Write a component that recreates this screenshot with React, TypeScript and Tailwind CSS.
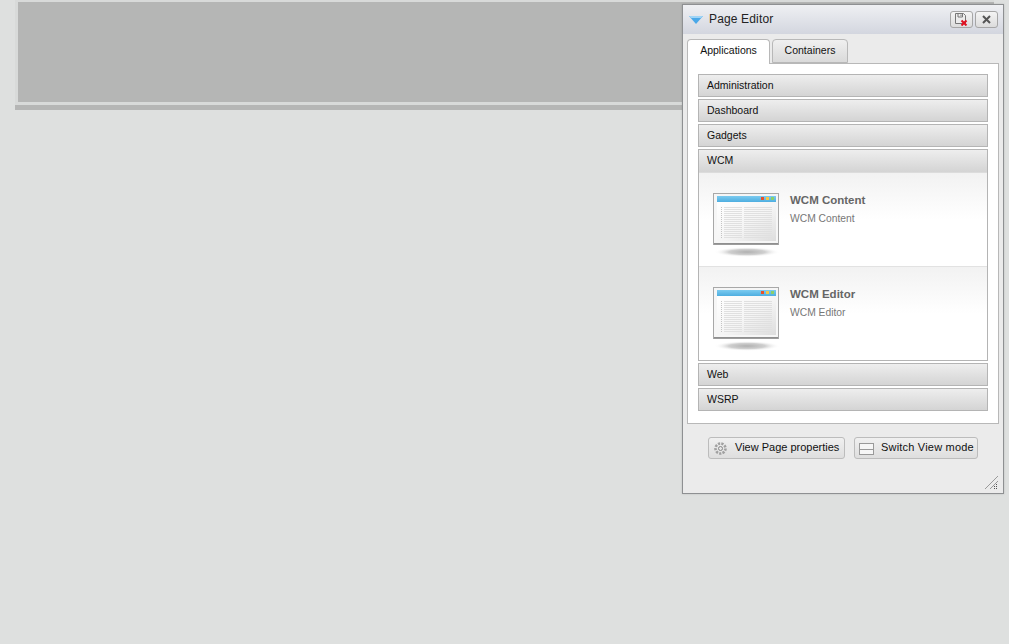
import React from 'react';

const font = { fontFamily: '"Liberation Sans", Arial, sans-serif' };

const Header = ({ label, open }: { label: string; open?: boolean }) => (
  <div className={`h-[23px] flex items-center pl-2 text-[10.5px] text-[#111] bg-gradient-to-b from-[#eeeeee] to-[#d4d4d4] ${open ? 'border-b border-[#dcdcdc]' : 'border border-[#b4b4b4]'}`}>
    {label}
  </div>
);

const Thumb = ({ id }: { id: string }) => (
  <div className="w-[68px] shrink-0 mt-[1px]">
    <svg width="68" height="66" viewBox="0 0 68 66">
      <defs>
        <radialGradient id={`sh-${id}`}>
          <stop offset="0%" stopColor="#b0b0b0" />
          <stop offset="55%" stopColor="#d0d0d0" />
          <stop offset="100%" stopColor="#ffffff" stopOpacity="0" />
        </radialGradient>
        <linearGradient id={`bar-${id}`} x1="0" y1="0" x2="0" y2="1">
          <stop offset="0%" stopColor="#7ccbf0" />
          <stop offset="100%" stopColor="#4eaee0" />
        </linearGradient>
        <linearGradient id={`body-${id}`} x1="0" y1="0" x2="1" y2="1">
          <stop offset="0%" stopColor="#ffffff" />
          <stop offset="55%" stopColor="#f4f4f4" />
          <stop offset="100%" stopColor="#dddddd" />
        </linearGradient>
      </defs>
      <ellipse cx="34" cy="59" rx="33" ry="5" fill={`url(#sh-${id})`} />
      <rect x="0.5" y="0.5" width="65" height="51" fill="#f6f6f6" stroke="#a8a8a8" />
      <rect x="1" y="50" width="64" height="1.5" fill="#8f8f8f" />
      <rect x="4" y="3" width="59" height="6" fill={`url(#bar-${id})`} />
      <rect x="48" y="4" width="3" height="3" fill="#e8502a" />
      <rect x="53" y="4" width="3" height="3" fill="#f2c84b" />
      <rect x="58" y="4" width="3" height="3" fill="#8ccf6a" />
      <rect x="4" y="9" width="59" height="39" fill={`url(#body-${id})`} />
      {[14, 16, 18, 20, 22, 24, 26, 28, 30, 32, 34, 36, 38, 40, 42, 44].map((y) => (
        <g key={y}>
          <rect x="11" y={y} width="18" height="1" fill="#e0e0e0" />
          <rect x="31" y={y} width="28" height="1" fill="#e0e0e0" />
          <rect x="8" y={y} width="1" height="1" fill="#c4c4c4" />
        </g>
      ))}
    </svg>
  </div>
);

const Item = ({ title, last }: { title: string; last?: boolean }) => (
  <div className={`flex pl-[14px] pt-[19px] bg-gradient-to-b from-[#f2f2f2] via-white to-white ${last ? 'h-[93px]' : 'h-[94px] border-b border-[#e2e2e2]'}`}>
    <Thumb id={last ? 'b' : 'a'} />
    <div className="ml-[9px]">
      <div className="text-[11.5px] font-bold text-[#666] leading-[14px] mt-[1px]">{title}</div>
      <div className="text-[10.3px] text-[#777] leading-[14px] mt-[5px]">{title}</div>
    </div>
  </div>
);

export default function App() {
  return (
    <div className="relative w-[1009px] h-[644px] overflow-hidden bg-[#dee0df]" style={font}>
      <div className="ml-[15px] w-[979px]">
        <div className="h-[105px] bg-[#d8dad9] pl-[3px] pt-[2px]">
          <div className="h-[100px] bg-[#b5b6b5]" />
        </div>
        <div className="h-[5px] bg-[#b5b6b5]" />
      </div>

      {/* floating page editor window */}
      <div className="absolute left-[682px] top-[4px] w-[322px] h-[490px] border border-[#8e9092] bg-[#ebebeb] shadow-[0_0_2px_rgba(0,0,0,0.15)]">
        <div className="h-[29px] flex items-center pl-[6px] pr-[5px] bg-gradient-to-b from-[#eff0f3] to-[#d3d6df]">
          <svg width="14" height="8" viewBox="0 0 14 8" className="mt-[1px]">
            <path d="M0 0H14L7 8Z" fill="#4aa8e8" />
            <path d="M0 0H14L12 2H2Z" fill="#9fd4f6" />
          </svg>
          <span className="ml-[6px] mb-[2px] text-[12px] tracking-[0.15px] text-[#222]">Page Editor</span>
          <div className="ml-auto flex gap-[2px]">
            <div className="w-[23px] h-[17px] border border-[#a6a6a6] rounded-[3px] bg-gradient-to-b from-[#f4f4f4] to-[#dcdcdc] flex items-center justify-center">
              <svg width="13" height="13" viewBox="0 0 13 13">
                <path d="M0.5 0.5H8.5L10.5 2.5V10.5H0.5Z" fill="#ececec" stroke="#777" />
                <path d="M3 1V4H7.5V1M6 1.5V3" fill="none" stroke="#777" />
                <path d="M6.5 7.5L11.5 12.5M11.5 7.5L6.5 12.5" stroke="#e01020" strokeWidth="2" />
              </svg>
            </div>
            <div className="w-[23px] h-[17px] border border-[#a6a6a6] rounded-[3px] bg-gradient-to-b from-[#f4f4f4] to-[#dcdcdc] flex items-center justify-center">
              <svg width="9" height="9" viewBox="0 0 9 9">
                <path d="M1 1L8 8M8 1L1 8" stroke="#555" strokeWidth="2" />
              </svg>
            </div>
          </div>
        </div>

        <div className="px-[4px] pt-[5px]">
          <div className="flex gap-[2px] relative z-10 h-[25px]">
            <div className="w-[83px] h-[25px] pb-[2px] border border-b-0 border-[#b8b8b8] rounded-t-[4px] bg-white flex items-center justify-center text-[10.5px] text-[#111]">Applications</div>
            <div className="w-[76px] h-[24px] pb-[1px] border border-[#b8b8b8] rounded-t-[4px] bg-gradient-to-b from-[#f0f0f0] to-[#dadada] flex items-center justify-center text-[10.5px] text-[#111]">Containers</div>
          </div>
          <div className="-mt-[1px] h-[361px] border border-[#b8b8b8] bg-white px-[10px] pt-[10px] flex flex-col gap-[2px]">
            <Header label="Administration" />
            <Header label="Dashboard" />
            <Header label="Gadgets" />
            <div className="border border-[#b4b4b4]">
              <Header label="WCM" open />
              <Item title="WCM Content" />
              <Item title="WCM Editor" last />
            </div>
            <Header label="Web" />
            <Header label="WSRP" />
          </div>
        </div>

        <div className="flex pl-[25px] gap-[9px] mt-[13px]">
          <div className="w-[137px] h-[22px] border border-[#bcbcbc] rounded-[3px] bg-gradient-to-b from-[#f0f0f0] to-[#dedede] flex items-center pl-[4px] text-[11px] text-[#111]">
            <svg width="15" height="15" viewBox="0 0 15 15">
              <circle cx="7.5" cy="7.5" r="5" fill="none" stroke="#a0a0a0" strokeWidth="2.6" strokeDasharray="2.2 1.2" />
              <circle cx="7.5" cy="7.5" r="2" fill="none" stroke="#888" />
            </svg>
            <span className="ml-[7px] mb-[2px]">View Page properties</span>
          </div>
          <div className="w-[124px] h-[22px] border border-[#bcbcbc] rounded-[3px] bg-gradient-to-b from-[#f0f0f0] to-[#dedede] flex items-center pl-[4px] text-[11px] tracking-[0.2px] text-[#111]">
            <svg width="15" height="13" viewBox="0 0 15 13" className="mt-[1px]">
              <rect x="0.5" y="1.5" width="14" height="11" fill="#f6f6f6" stroke="#999" />
              <path d="M1 7.5H14" stroke="#999" />
            </svg>
            <span className="ml-[7px] mb-[2px]">Switch View mode</span>
          </div>
        </div>

        <svg width="13" height="13" viewBox="0 0 13 13" className="absolute right-[5px] bottom-[4px]">
          <path d="M0 13L13 0M5 13L13 5" stroke="#9a9a9a" />
          <path d="M9 12.5H10M11 12.5H12M11 10.5H12M11 8.5H12M9 10.5H10" stroke="#555" />
        </svg>
      </div>
    </div>
  );
}
